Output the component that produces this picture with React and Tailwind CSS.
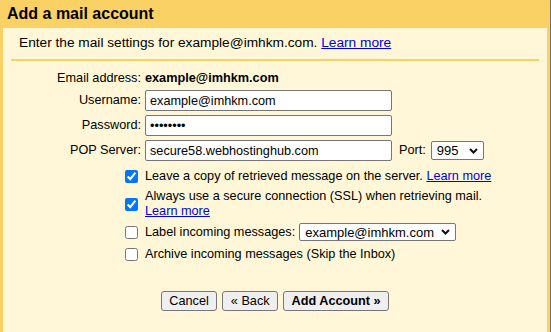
import React from "react";

const Chevron = () => (
  <svg width="9" height="6" viewBox="0 0 9 6" className="shrink-0">
    <path d="M1 1 L4.5 4.5 L8 1" fill="none" stroke="#111" strokeWidth="2" />
  </svg>
);

function FakeSelect({ value, className }) {
  return (
    <div
      className={
        "flex items-center justify-between bg-white border border-[#767676] rounded-[2px] pl-[5px] pr-[5px] " +
        className
      }
    >
      <span className="leading-[15px]">{value}</span>
      <Chevron />
    </div>
  );
}

function CheckRow({ checked, children, className }) {
  return (
    <div className={"flex items-center " + className}>
      <div className="w-[130px] flex justify-end pr-[3px]">
        <input
          type="checkbox"
          checked={checked}
          readOnly
          className="w-[13px] h-[13px] accent-[#0075ff]"
        />
      </div>
      <div className="ml-[4px] leading-[15px]">{children}</div>
    </div>
  );
}

function App() {
  return (
    <div className="w-[551px] h-[332px] bg-[#fad165] border-r border-[#6e6e6e] flex flex-col overflow-hidden text-black font-['Liberation_Sans',Arial,sans-serif]">
      <div className="h-[28px] flex items-center pl-[7px] text-[16px] font-bold">
        Add a mail account
      </div>

      <div className="flex-1 mx-[3px] bg-[#fff7d7] px-[8px] pt-[7px]">
        <div className="pl-[8px] text-[13.7px] leading-[16px]">
          Enter the mail settings for example@imhkm.com.{" "}
          <a className="text-[#0000ee] underline">Learn more</a>
        </div>
        <div className="mt-[8px] h-[2px] bg-[#fad165]" />

        <div className="text-[12.7px]">
          <div className="flex items-center mt-[10px] leading-[15px]">
            <div className="w-[130px] text-right">Email address:</div>
            <div className="ml-[4px] font-bold">example@imhkm.com</div>
          </div>

          <div className="flex items-center mt-[4px]">
            <div className="w-[130px] text-right">Username:</div>
            <input
              readOnly
              value="example@imhkm.com"
              className="ml-[4px] w-[247px] h-[21px] px-[4px] bg-white border border-[#767676] rounded-[2px] outline-none"
            />
          </div>

          <div className="flex items-center mt-[4px]">
            <div className="w-[130px] text-right">Password:</div>
            <input
              readOnly
              type="password"
              value="password"
              className="ml-[4px] w-[247px] h-[21px] px-[4px] bg-white border border-[#767676] rounded-[2px] outline-none"
            />
          </div>

          <div className="flex items-center mt-[4px]">
            <div className="w-[130px] text-right">POP Server:</div>
            <input
              readOnly
              value="secure58.webhostinghub.com"
              className="ml-[4px] w-[247px] h-[21px] px-[4px] bg-white border border-[#767676] rounded-[2px] outline-none"
            />
            <span className="ml-[7px]">Port:</span>
            <FakeSelect value="995" className="ml-[5px] w-[53px] h-[19px] text-[13px]" />
          </div>

          <CheckRow checked className="mt-[8px]">
            Leave a copy of retrieved message on the server.{" "}
            <a className="text-[#0000ee] underline">Learn more</a>
          </CheckRow>

          <CheckRow checked className="mt-[5px]">
            Always use a secure connection (SSL) when retrieving mail.
            <br />
            <a className="text-[#0000ee] underline">Learn more</a>
          </CheckRow>

          <CheckRow checked={false} className="mt-[4px] h-[18px]">
            <div className="flex items-center">
              <span>Label incoming messages:</span>
              <FakeSelect
                value="example@imhkm.com"
                className="ml-[4px] w-[157px] h-[18px] text-[13px]"
              />
            </div>
          </CheckRow>

          <CheckRow checked={false} className="mt-[6px]">
            Archive incoming messages (Skip the Inbox)
          </CheckRow>

          <div className="flex justify-center gap-[5px] mt-[29px]">
            <button className="h-[20px] px-[7.5px] bg-[#efefef] border border-[#767676] rounded-[3px] leading-[15px]">
              Cancel
            </button>
            <button className="h-[20px] px-[7.5px] bg-[#efefef] border border-[#767676] rounded-[3px] leading-[15px]">
              « Back
            </button>
            <button className="h-[20px] px-[7.5px] bg-[#efefef] border border-[#767676] rounded-[3px] leading-[15px] font-bold">
              Add Account »
            </button>
          </div>
        </div>
      </div>
    </div>
  );
}

export default App;
